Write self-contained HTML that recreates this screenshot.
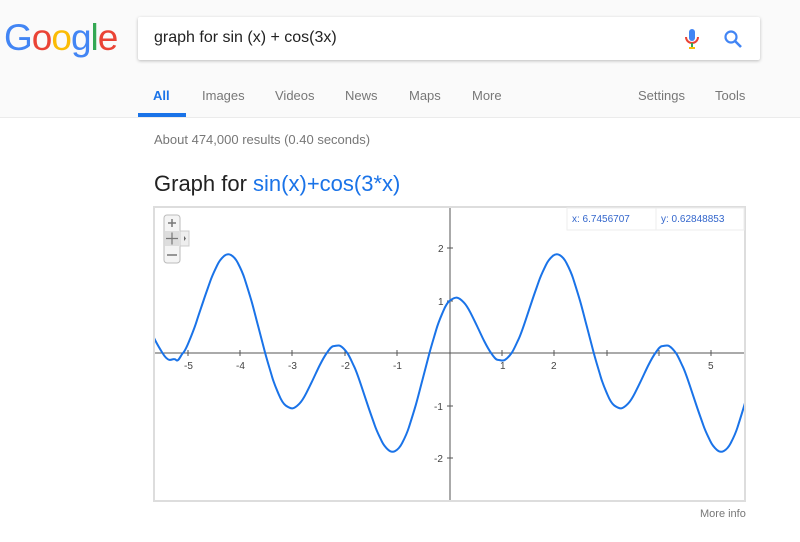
<!DOCTYPE html>
<html><head><meta charset="utf-8"><style>
body{margin:0;width:800px;height:542px;background:#fff;font-family:"Liberation Sans",Arial,sans-serif;position:relative;overflow:hidden}
.hdr{position:absolute;left:0;top:0;width:800px;height:117px;background:#fafafa;border-bottom:1px solid #ebebeb}
.logo{position:absolute;left:4px;top:17px;font-size:37px;letter-spacing:-1px;font-family:"Liberation Sans",sans-serif}
.box{position:absolute;left:138px;top:17px;width:622px;height:43px;background:#fff;box-shadow:0 1px 3px rgba(0,0,0,.25);border-radius:2px}
.q{position:absolute;left:16px;top:12px;font-size:16px;color:#222}
.tab{position:absolute;top:88px;font-size:13px;color:#777}
.t{position:absolute}
</style></head><body>
<div class="hdr">
<div class="logo"><span style="color:#4285f4">G</span><span style="color:#ea4335">o</span><span style="color:#fbbc05">o</span><span style="color:#4285f4">g</span><span style="color:#34a853">l</span><span style="color:#ea4335">e</span></div>
<div class="box"><div class="q">graph for sin (x) + cos(3x)</div>
<svg style="position:absolute;left:546px;top:11px" width="16" height="22" viewBox="0 0 16 22"><rect x="5" y="1" width="6" height="12" rx="3" fill="#4285f4"/><path d="M2 9a6 6 0 0 0 12 0" fill="none" stroke="#ea4335" stroke-width="2"/><rect x="7" y="15" width="2" height="5" fill="#34a853"/><rect x="5" y="19" width="6" height="2" fill="#fbbc05"/></svg>
<svg style="position:absolute;left:585px;top:12px" width="20" height="20" viewBox="0 0 20 20"><circle cx="8" cy="8" r="5.5" fill="none" stroke="#4285f4" stroke-width="2.2"/><path d="M12 12l6 6" stroke="#4285f4" stroke-width="2.6"/></svg>
</div>
<div class="tab" style="left:153px;color:#1a73e8;font-weight:bold">All</div>
<div style="position:absolute;left:138px;top:113px;width:48px;height:4px;background:#1a73e8"></div>
<div class="tab" style="left:202px">Images</div>
<div class="tab" style="left:275px">Videos</div>
<div class="tab" style="left:345px">News</div>
<div class="tab" style="left:409px">Maps</div>
<div class="tab" style="left:472px">More</div>
<div class="tab" style="left:638px">Settings</div>
<div class="tab" style="left:715px">Tools</div>
</div>
<div class="t" style="left:154px;top:132px;font-size:13px;color:#777">About 474,000 results (0.40 seconds)</div>
<div class="t" style="left:154px;top:171px;font-size:22px;color:#222">Graph for <span style="color:#1a73e8">sin(x)+cos(3*x)</span></div>
<svg style="position:absolute;left:0;top:0" width="800" height="542">
<defs><clipPath id="c"><rect x="155" y="208" width="589" height="292"/></clipPath></defs>
<rect x="154" y="207" width="591" height="294" fill="#fff" stroke="#ddd" stroke-width="2"/>
<line x1="155" y1="353" x2="744" y2="353" stroke="#555" stroke-width="1"/>
<line x1="450" y1="208" x2="450" y2="500" stroke="#555" stroke-width="1"/>
<g stroke="#555" stroke-width="1">
<line x1="188" y1="350" x2="188" y2="356"/><line x1="240" y1="350" x2="240" y2="356"/><line x1="292" y1="350" x2="292" y2="356"/><line x1="345" y1="350" x2="345" y2="356"/><line x1="397" y1="350" x2="397" y2="356"/><line x1="502" y1="350" x2="502" y2="356"/><line x1="554" y1="350" x2="554" y2="356"/><line x1="607" y1="350" x2="607" y2="356"/><line x1="659" y1="350" x2="659" y2="356"/><line x1="711" y1="350" x2="711" y2="356"/>
<line x1="447" y1="248" x2="453" y2="248"/><line x1="447" y1="301" x2="453" y2="301"/><line x1="447" y1="406" x2="453" y2="406"/><line x1="447" y1="458" x2="453" y2="458"/>
</g>
<g font-size="10" fill="#444" font-family="Liberation Sans,sans-serif">
<text x="184" y="369">-5</text><text x="236" y="369">-4</text><text x="288" y="369">-3</text><text x="341" y="369">-2</text><text x="393" y="369">-1</text><text x="500" y="369">1</text><text x="551" y="369">2</text><text x="708" y="369">5</text>
<text x="438" y="252">2</text><text x="438" y="305">1</text><text x="434" y="410">-1</text><text x="434" y="462">-2</text>
</g>
<g clip-path="url(#c)">
<path transform="translate(450,353) scale(6.846,-52.5)" vector-effect="non-scaling-stroke" fill="none" stroke="#1a73e8" stroke-width="2" stroke-linejoin="round"
d="M-44,.5 C-43.67,.41 -43.33,.31 -43,.2261 S-42.33,.07 -42,0 S-41.33,-.12 -41,-.1305 S-40.33,-.09 -40,-.134 S-39.33,-.04 -39,0 S-38.33,.15 -38,.2588 S-37.33,.47 -37,.6087 S-36.33,.87 -36,1 S-35.33,1.25 -35,1.3741 S-34.33,1.58 -34,1.673 S-33.33,1.81 -33,1.8478 S-32.33,1.89 -32,1.866 S-31.33,1.8 -31,1.7173 S-30.33,1.55 -30,1.4142 S-29.33,1.14 -29,.9915 S-28.33,.66 -28,.5 S-27.33,.16 -27,0 S-26.33,-.3 -26,-.4483 S-25.33,-.69 -25,-.7934 S-24.33,-.97 -24,-1 S-23.33,-1.06 -23,-1.0544 S-22.33,-1.01 -22,-.9659 S-21.33,-.85 -21,-.7654 S-20.33,-.59 -20,-.5 S-19.33,-.31 -19,-.2261 S-18.33,-.06 -18,0 S-17.33,.13 -17,.1305 S-16.33,.16 -16,.134 S-15.33,.06 -15,0 S-14.33,-.17 -14,-.2588 S-13.33,-.48 -13,-.6087 S-12.33,-.87 -12,-1 S-11.33,-1.25 -11,-1.3741 S-10.33,-1.58 -10,-1.673 S-9.33,-1.81 -9,-1.8478 S-8.33,-1.89 -8,-1.866 S-7.33,-1.8 -7,-1.7173 S-6.33,-1.55 -6,-1.4142 S-5.33,-1.14 -5,-.9915 S-4.33,-.66 -4,-.5 S-3.33,-.16 -3,0 S-2.33,.3 -2,.4483 S-1.33,.69 -1,.7934 S-.33,.97 0,1 S.67,1.06 1,1.0544 S1.67,1.01 2,.9659 S2.67,.85 3,.7654 S3.67,.59 4,.5 S4.67,.31 5,.2261 S5.67,.06 6,0 S6.67,-.13 7,-.1305 S7.67,-.16 8,-.134 S8.67,-.06 9,0 S9.67,.17 10,.2588 S10.67,.48 11,.6087 S11.67,.87 12,1 S12.67,1.25 13,1.3741 S13.67,1.58 14,1.673 S14.67,1.81 15,1.8478 S15.67,1.89 16,1.866 S16.67,1.8 17,1.7173 S17.67,1.55 18,1.4142 S18.67,1.14 19,.9915 S19.67,.66 20,.5 S20.67,.16 21,0 S21.67,-.3 22,-.4483 S22.67,-.69 23,-.7934 S23.67,-.97 24,-1 S24.67,-1.06 25,-1.0544 S25.67,-1.01 26,-.9659 S26.67,-.85 27,-.7654 S27.67,-.59 28,-.5 S28.67,-.31 29,-.2261 S29.67,-.06 30,0 S30.67,.13 31,.1305 S31.67,.16 32,.134 S32.67,.06 33,0 S33.67,-.17 34,-.2588 S34.67,-.48 35,-.6087 S35.67,-.87 36,-1 S36.67,-1.25 37,-1.3741 S37.67,-1.58 38,-1.673 S38.67,-1.81 39,-1.8478 S39.67,-1.89 40,-1.866 S40.67,-1.8 41,-1.7173 S41.67,-1.55 42,-1.4142 S42.67,-1.14 43,-.9915 S43.67,-.66 44,-.5"/>
</g>
<rect x="567" y="208" width="177" height="22" fill="#fff" stroke="#eee"/>
<line x1="656" y1="208" x2="656" y2="230" stroke="#eee"/>
<text x="572" y="222" font-size="10" fill="#3366cc" font-family="Liberation Sans,sans-serif">x: 6.7456707</text>
<text x="661" y="222" font-size="10" fill="#3366cc" font-family="Liberation Sans,sans-serif">y: 0.62848853</text>
<rect x="164" y="215" width="16" height="48" rx="3" fill="#f4f4f4" stroke="#bbb"/>
<rect x="180" y="231" width="9" height="15" fill="#eee" stroke="#ccc"/>
<path d="M184 236l2 2.5-2 2.5z" fill="#666"/>
<rect x="165" y="231" width="14" height="15" fill="#ddd"/>
<path d="M168 223h8M172 219v8M167 255h10" stroke="#777" stroke-width="1.5"/>
<path d="M166 238.5h12M172 232.5v12" stroke="#777" stroke-width="1.2"/>
</svg>
<div class="t" style="left:700px;top:508px;font-size:11px;color:#777">More info</div>
</body></html>
